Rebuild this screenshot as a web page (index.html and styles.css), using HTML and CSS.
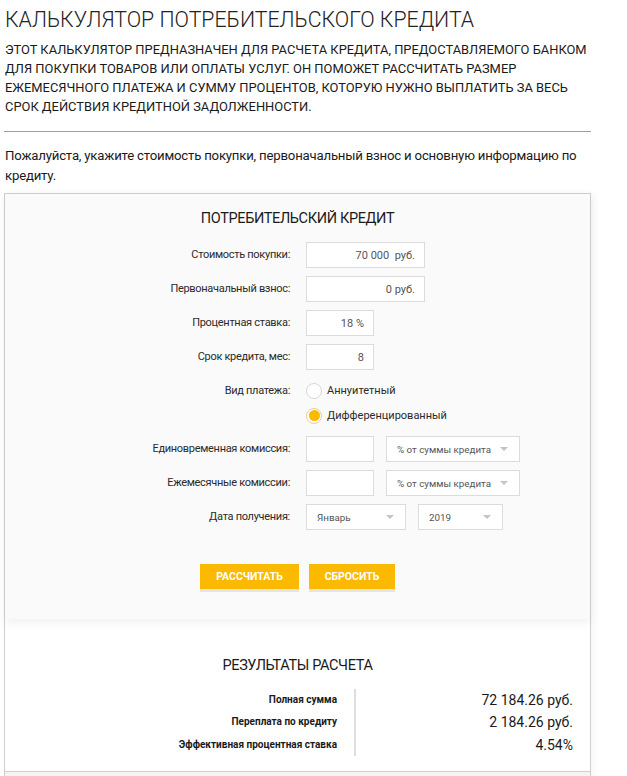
FILE: index.html
```html
<!DOCTYPE html>
<html lang="ru">
<head>
<meta charset="utf-8">
<title>Калькулятор потребительского кредита</title>
<link rel="stylesheet" href="styles.css">
</head>
<body>
<div class="page">
  <h1 class="title">Калькулятор потребительского кредита</h1>
  <p class="lead">Этот калькулятор предназначен для расчета кредита, предоставляемого банком для покупки товаров или оплаты услуг. Он поможет рассчитать размер ежемесячного платежа и сумму процентов, которую нужно выплатить за весь срок действия кредитной задолженности.</p>
  <hr class="rule">
  <p class="intro">Пожалуйста, укажите стоимость покупки, первоначальный взнос и основную информацию по кредиту.</p>

  <div class="calc">
    <section class="form-panel">
      <h2 class="panel-title">Потребительский кредит</h2>
      <div class="rows">
        <div class="row">
          <span class="label">Стоимость покупки:</span>
          <div class="controls"><span class="input w-lg">70 000&nbsp;&nbsp;руб.</span></div>
        </div>
        <div class="row">
          <span class="label">Первоначальный взнос:</span>
          <div class="controls"><span class="input w-lg">0 руб.</span></div>
        </div>
        <div class="row">
          <span class="label">Процентная ставка:</span>
          <div class="controls"><span class="input w-sm">18 %</span></div>
        </div>
        <div class="row">
          <span class="label">Срок кредита, мес:</span>
          <div class="controls"><span class="input w-sm">8</span></div>
        </div>
        <div class="row row-radio">
          <span class="label">Вид платежа:</span>
          <div class="radios">
            <div class="radio"><span class="dot"></span>Аннуитетный</div>
            <div class="radio checked"><span class="dot"></span>Дифференцированный</div>
          </div>
        </div>
        <div class="row">
          <span class="label">Единовременная комиссия:</span>
          <div class="controls"><span class="input w-sm"></span><span class="select w-sel">% от суммы кредита<i class="caret"></i></span></div>
        </div>
        <div class="row">
          <span class="label">Ежемесячные комиссии:</span>
          <div class="controls"><span class="input w-sm"></span><span class="select w-sel">% от суммы кредита<i class="caret"></i></span></div>
        </div>
        <div class="row">
          <span class="label">Дата получения:</span>
          <div class="controls"><span class="select w-month">Январь<i class="caret"></i></span><span class="select w-year">2019<i class="caret"></i></span></div>
        </div>
      </div>
      <div class="buttons">
        <button class="btn">Рассчитать</button>
        <button class="btn">Сбросить</button>
      </div>
    </section>

    <section class="results">
      <h2 class="panel-title">Результаты расчета</h2>
      <div class="res-table">
        <div class="res-labels">
          <div class="res-cell">Полная сумма</div>
          <div class="res-cell">Переплата по кредиту</div>
          <div class="res-cell">Эффективная процентная ставка</div>
        </div>
        <div class="res-values">
          <div class="res-cell">72 184.26 руб.</div>
          <div class="res-cell">2 184.26 руб.</div>
          <div class="res-cell">4.54%</div>
        </div>
      </div>
    </section>
    <div class="next"></div>
  </div>
</div>
</body>
</html>
```
FILE: styles.css
```css
* { box-sizing: border-box; }

html, body {
  margin: 0;
  padding: 0;
  background: #fff;
}

body {
  font-family: Roboto, "Liberation Sans", Arial, sans-serif;
  color: #1f1f1f;
}

.page {
  padding: 0 36px 0 4px;
}

.title {
  margin: 0;
  padding: 6px 0 0 1px;
  font-size: 21.3px;
  font-weight: 300;
  line-height: 28px;
  text-transform: uppercase;
  color: #222;
}

.lead {
  margin: 6px -7px 0 0;
  padding-left: 1px;
  font-size: 12.9px;
  line-height: 19px;
  text-transform: uppercase;
  color: #1a1a1a;
}

.rule {
  margin: 15px 0 0;
  border: 0;
  border-top: 1px solid #9e9e9e;
  height: 0;
}

.intro {
  margin: 14px 0 0;
  padding-left: 1px;
  font-size: 13.2px;
  letter-spacing: -0.2px;
  line-height: 20px;
  color: #1a1a1a;
}

.calc {
  margin-top: 7px;
  border: 1px solid #cfcfcf;
  border-bottom: 0;
  box-shadow: 3px 0 8px rgba(0, 0, 0, 0.04);
}

.form-panel {
  position: relative;
  z-index: 1;
  background: #fafafa;
  padding: 16px 0 30px;
  box-shadow: 0 4px 10px rgba(0, 0, 0, 0.06);
}

.panel-title {
  margin: 0;
  text-align: center;
  font-size: 14.5px;
  letter-spacing: -0.35px;
  font-weight: 400;
  line-height: 18px;
  text-transform: uppercase;
  color: #1a1a1a;
}

.rows {
  margin-top: 14px;
  display: flex;
  flex-direction: column;
  gap: 8px;
}

.row {
  display: grid;
  grid-template-columns: 285px auto;
  column-gap: 16px;
  align-items: center;
}

.label {
  text-align: right;
  font-size: 11px;
  letter-spacing: -0.3px;
  color: #2a2a2a;
  line-height: 26px;
}

.controls {
  display: flex;
  gap: 12px;
}

.input, .select {
  display: flex;
  align-items: center;
  height: 26px;
  background: #fff;
  border: 1px solid #dcdcdc;
  font-size: 11px;
  color: #555;
}

.input {
  justify-content: flex-end;
  padding-right: 9px;
}

.w-lg { width: 119px; }
.w-sm { width: 68px; }

.select {
  justify-content: space-between;
  padding: 0 11px 0 10px;
  font-size: 9.8px;
}

.w-sel { width: 134px; }
.w-month { width: 100px; }
.w-year { width: 85px; }

.caret {
  width: 0;
  height: 0;
  border-left: 4px solid transparent;
  border-right: 4px solid transparent;
  border-top: 4px solid #c4c4c4;
}

.row-radio {
  align-items: start;
}

.row-radio .label {
  line-height: 25px;
}

.radios {
  display: flex;
  flex-direction: column;
}

.radio {
  display: flex;
  align-items: center;
  height: 25px;
  font-size: 11px;
  color: #2a2a2a;
}

.dot {
  width: 16px;
  height: 16px;
  border-radius: 50%;
  border: 1px solid #d6d6d6;
  background: #fff;
  margin-right: 5px;
  display: flex;
  align-items: center;
  justify-content: center;
}

.radio.checked .dot {
  border-color: #e6cf9a;
}

.radio.checked .dot::before {
  content: "";
  width: 11px;
  height: 11px;
  border-radius: 50%;
  background: #fbb900;
}

.buttons {
  margin-top: 34px;
  display: flex;
  justify-content: center;
  gap: 10px;
}

.btn {
  height: 25px;
  padding: 0;
  border: 0;
  background: #fbb900;
  color: #fff;
  font-family: Roboto, "Liberation Sans", Arial, sans-serif;
  font-weight: 700;
  font-size: 10.5px;
  text-transform: uppercase;
  box-shadow: 0 3px 0 #e4e4e4;
  cursor: pointer;
}

.btn:first-child { width: 99px; }
.btn:last-child { width: 86px; }

.results {
  background: #fff;
  padding: 38px 0 15px;
  border-bottom: 1px solid #cfcfcf;
}

.res-table {
  margin-top: 14px;
  display: flex;
}

.res-labels {
  width: 349px;
  padding-right: 17px;
  text-align: right;
}

.res-values {
  width: 219px;
  border-left: 2px solid #dedede;
  text-align: right;
}

.res-cell {
  height: 22.3px;
  line-height: 22px;
}

.res-labels .res-cell {
  font-size: 10px;
  font-weight: 700;
  color: #1a1a1a;
}

.res-values .res-cell {
  font-size: 14px;
  color: #1a1a1a;
}

.next {
  height: 20px;
  background: #f4f4f4;
}
```
